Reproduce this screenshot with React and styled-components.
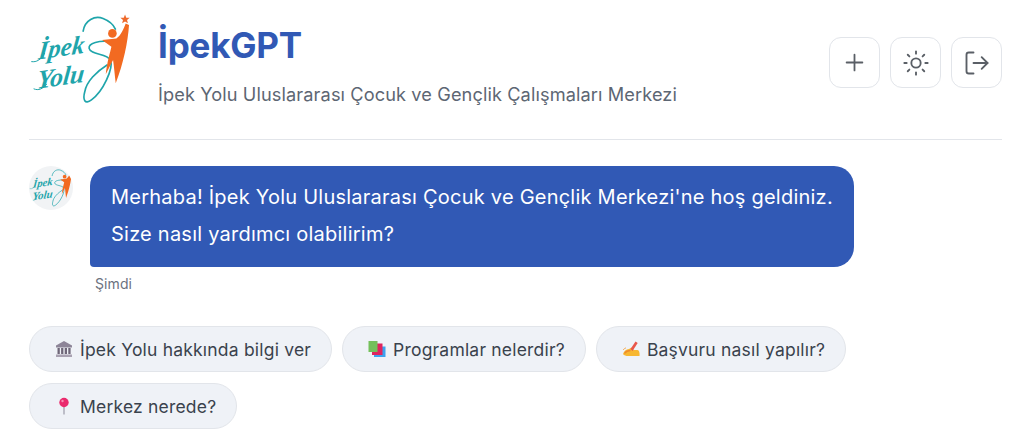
import React from "react";
import styled, { createGlobalStyle } from "styled-components";
import { Plus, Sun, LogOut } from "lucide-react";

const Global = createGlobalStyle`
  html, body { margin: 0; padding: 0; background: #fff; height: 447px; overflow: hidden; }
  body { font-family: Inter, "Liberation Sans", sans-serif; }
`;
const Page = styled.div`
  width: 1024px; height: 447px; box-sizing: border-box; padding: 0 22px 0 29px; overflow: hidden;
`;
const Header = styled.header`
  height: 140px; box-sizing: border-box; border-bottom: 1px solid #e2e5ea;
  display: flex; align-items: flex-start; padding-top: 10px;
`;
const Brand = styled.div`flex: 1; display: flex; gap: 26px;`;
const BrandText = styled.div`display: flex; flex-direction: column; padding-top: 12px;`;
const Title = styled.h1`
  margin: 0; font-size: 35px; line-height: 46px; font-weight: 700; color: #3159b5; letter-spacing: -0.2px;
`;
const Subtitle = styled.p`
  margin: 14px 0 0; font-size: 18.2px; line-height: 24px; color: #5d6673; font-weight: 400; letter-spacing: 0.1px;
`;
const Actions = styled.div`display: flex; gap: 10px; padding-top: 27px;`;
const IconButton = styled.button`
  width: 51px; height: 51px; box-sizing: border-box; padding: 0; background: #fff;
  border: 1px solid #e2e5ea; border-radius: 12px; color: #5a5f66;
  display: flex; align-items: center; justify-content: center;
`;
const Message = styled.div`display: flex; gap: 17px; padding-top: 26px;`;
const AvatarWrap = styled.div`
  width: 44px; height: 44px; border-radius: 50%; background: #f1f3f5; flex: none; overflow: hidden;
`;
const Column = styled.div`display: flex; flex-direction: column;`;
const Bubble = styled.div`
  width: 764px; height: 101px; box-sizing: border-box; padding: 13px 10px 0 21px;
  background: #3159b5; color: #fff; font-size: 20px; line-height: 37px; letter-spacing: 0.23px; white-space: nowrap;
  border-radius: 20px 20px 20px 4px;
`;
const Time = styled.div`
  margin: 9px 0 0 5px; font-size: 14px; line-height: 16px; color: #6b7280; letter-spacing: 0.1px;
`;
const Chips = styled.div`display: flex; flex-wrap: wrap; gap: 11px 10px; margin-top: 34px; width: 830px;`;
const Chip = styled.button`
  height: 46px; box-sizing: border-box; padding: 0 20px 0 25px; display: flex; align-items: center; gap: 7px;
  background: #eff2f7; border: 1px solid #e2e5ea; border-radius: 23px;
  font-family: inherit; font-size: 17.500px; letter-spacing: 0.2px; color: #3a424d;
`;
const Glyph = styled.svg`width: 18px; height: 18px; flex: none; display: block;`;

const Logo = ({ width, height }) => (
  <svg width={width} height={height} viewBox="27 15 310 300" style={{ display: "block", flex: "none" }}>
    <g fill="none" stroke="#1fa5ab" strokeLinecap="round">
      <path d="M190 78C195 45 225 30 250 40C270 48 282 60 287 72" strokeWidth="5" />
      <path d="M270 110C240 105 205 115 208 130C212 150 262 145 272 165C282 190 250 260 215 285C195 300 188 285 195 260C200 230 230 200 262 180" strokeWidth="5" />
      <path d="M35 170C50 172 62 165 74 145" strokeWidth="3" />
      <path d="M42 252C56 258 68 252 80 238" strokeWidth="3" />
    </g>
    <path d="M247 105L290 100C305 90 312 70 318 55L328 60C325 110 310 180 288 235C285 210 283 185 280 165L258 208C262 170 272 140 275 125Z" fill="#f26a21" />
    <circle cx="278" cy="85" r="13" fill="#f26a21" />
    <path d="M316 28l3.800 9.600 10.200.6-7.900 6.500 2.600 10-8.700-5.600-8.700 5.600 2.600-10-7.900-6.500 10.200-.6z" fill="#ee6a2c" />
    <text x="62" y="162" transform="rotate(-8 62 162) skewX(-14)" fontFamily='"Liberation Serif", serif' fontStyle="italic" fontWeight="700" fontSize="76" fill="#1fa5ab" dx="32">İpek</text>
    <text x="60" y="250" transform="rotate(-8 60 250) skewX(-14)" fontFamily='"Liberation Serif", serif' fontStyle="italic" fontWeight="700" fontSize="78" fill="#1fa5ab" dx="52">Yolu</text>
  </svg>
);

const Bank = () => (
  <Glyph viewBox="0 0 18 18">
    <path d="M9 1L17 5.500V7.500H1V5.500z" fill="#8d8598" />
    <path d="M2.500 8h2.300v6H2.500zM6.100 8h2.300v6H6.100zM9.700 8h2.300v6H9.700zM13.300 8h2.300v6h-2.300z" fill="#6e6678" />
    <path d="M1 14.500h16V17H1z" fill="#a8a1b1" />
  </Glyph>
);
const Books = () => (
  <Glyph viewBox="0 0 18 18">
    <rect x="6" y="6.500" width="11.500" height="10.500" fill="#3ea1ee" />
    <rect x="4" y="3.500" width="10.500" height="11.500" fill="#e0245e" />
    <rect x="0.500" y="1" width="9" height="11" fill="#74c05a" />
  </Glyph>
);
const Writing = () => (
  <Glyph viewBox="0 0 18 18">
    <path d="M1 14C2 11 4 9.500 7 9l2.500-1.500 2.500 2.500h3.500c1.500 0 2.500 3 2 6H6C4 16 2 15.500 1 14z" fill="#f7b731" />
    <path d="M8.500 9L13.500 1.500l2.200 1.400L10.500 11z" fill="#e8564a" />
    <path d="M2.500 13.500c2-3 4-3 6-3" stroke="#ef8a2a" strokeWidth="1.300" fill="none" />
    <path d="M1 10c1-1 2-2 3-2" stroke="#f4a64a" strokeWidth="1" fill="none" />
  </Glyph>
);
const Pin = () => (
  <Glyph viewBox="0 0 18 18">
    <rect x="8.300" y="8" width="1.400" height="9.500" fill="#a9a9b4" />
    <circle cx="9" cy="5.500" r="4.700" fill="#ea2a6d" />
    <circle cx="7.500" cy="4" r="1.200" fill="#f78fb3" />
  </Glyph>
);

const suggestions = [
  { icon: <Bank />, label: "İpek Yolu hakkında bilgi ver" },
  { icon: <Books />, label: "Programlar nelerdir?" },
  { icon: <Writing />, label: "Başvuru nasıl yapılır?" },
  { icon: <Pin />, label: "Merkez nerede?" },
];

export default function App() {
  return (
    <Page>
      <Global />
      <Header>
        <Brand>
          <Logo width={103} height={100} />
          <BrandText>
            <Title>İpekGPT</Title>
            <Subtitle>İpek Yolu Uluslararası Çocuk ve Gençlik Çalışmaları Merkezi</Subtitle>
          </BrandText>
        </Brand>
        <Actions>
          <IconButton aria-label="Yeni"><Plus size={27} strokeWidth={1.6} /></IconButton>
          <IconButton aria-label="Tema"><Sun size={28} strokeWidth={1.6} /></IconButton>
          <IconButton aria-label="Çıkış"><LogOut size={28} strokeWidth={1.6} /></IconButton>
        </Actions>
      </Header>
      <Message>
        <AvatarWrap><Logo width={44} height={44} /></AvatarWrap>
        <Column>
          <Bubble>
            Merhaba! İpek Yolu Uluslararası Çocuk ve Gençlik Merkezi'ne hoş geldiniz.
            <br />
            Size nasıl yardımcı olabilirim?
          </Bubble>
          <Time>Şimdi</Time>
        </Column>
      </Message>
      <Chips>
        {suggestions.map((s) => (
          <Chip key={s.label}>{s.icon}{s.label}</Chip>
        ))}
      </Chips>
    </Page>
  );
}
